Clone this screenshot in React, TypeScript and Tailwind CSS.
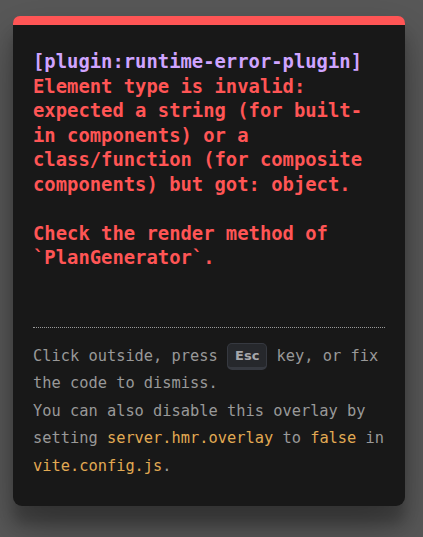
const message = `Element type is invalid:
expected a string (for built-
in components) or a
class/function (for composite
components) but got: object.

Check the render method of
\`PlanGenerator\`.`;

function Code({ children }: { children: string }) {
  return <code className="font-['DejaVu_Sans_Mono',monospace] text-[#e2aa53]">{children}</code>;
}

export default function App() {
  return (
    <div className="min-h-screen bg-[#585858] pt-[16px] font-['DejaVu_Sans_Mono',Menlo,monospace]">
      <div className="ml-[13px] w-[392px] rounded-t-[7px] rounded-b-[9px] border-t-[9px] border-[#ff5555] bg-[#181818] px-[20px] pb-[26px] pt-[25px] text-[#d8d8d8] shadow-[0_22px_45px_rgba(0,0,0,0.30),0_18px_14px_rgba(0,0,0,0.22)]">
        <pre className="whitespace-pre-wrap font-['DejaVu_Sans_Mono',monospace] text-[18.85px] leading-[24.5px] font-semibold">
          <span className="text-[#cfa4ff]">[plugin:runtime-error-plugin] </span>
          <span className="text-[#ff5555]">{"\n" + message}</span>
        </pre>
        <div className="mt-[56px] border-t border-dotted border-[#999] pt-[15px] text-[15.35px] leading-[27.5px] text-[#999]">
          Click outside, press{" "}
          <kbd className="inline-block rounded-[5px] border border-b-[3px] border-[#363940] bg-[#26282c] px-[7px] align-[1px] font-['DejaVu_Sans',sans-serif] text-[13px] leading-[23px] font-bold text-[#a6a7ab]">
            Esc
          </kbd>{" "}
          key, or fix the code to dismiss.
          <br />
          You can also disable this overlay by setting <Code>server.hmr.overlay</Code> to <Code>false</Code> in{" "}
          <Code>vite.config.js</Code>.
        </div>
      </div>
    </div>
  );
}
